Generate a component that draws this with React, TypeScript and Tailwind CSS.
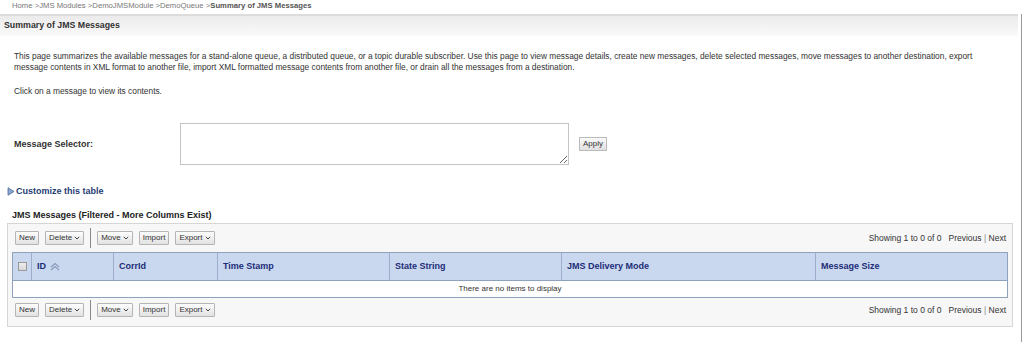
import React from "react";

const Chevron = () => (
  <svg width="6" height="4" viewBox="0 0 6 4" className="ml-[2px]">
    <path d="M0.8 0.8 L3 3 L5.2 0.8" fill="none" stroke="#444" strokeWidth="1" />
  </svg>
);

const Btn = ({ label, menu }: { label: string; menu?: boolean }) => (
  <button className="flex h-[14px] items-center rounded-[1px] border border-[#b5b5b5] bg-gradient-to-b from-[#fdfdfd] to-[#e2e2e2] px-[3px] text-[8px] leading-none text-[#333]">
    {label}
    {menu && <Chevron />}
  </button>
);

const Toolbar = () => (
  <div className="flex h-[14px] items-center justify-between pl-[7px] pr-[6px]">
    <div className="flex items-center gap-[6px]">
      <Btn label="New" />
      <Btn label="Delete" menu />
      <div className="-my-[3px] h-[20px] w-px bg-[#8a8a8a]" />
      <Btn label="Move" menu />
      <Btn label="Import" />
      <Btn label="Export" menu />
    </div>
    <div className="text-[8.5px] text-[#333]">
      Showing 1 to 0 of 0&nbsp;&nbsp; Previous <span className="text-[#888]">|</span> Next
    </div>
  </div>
);

const SortIcon = () => (
  <svg width="12" height="9" viewBox="0 0 12 9" className="ml-[3px]">
    <path d="M2 5 L6 1.5 L10 5" fill="none" stroke="#8a9cbc" strokeWidth="1.2" />
    <path d="M2 8 L6 4.5 L10 8" fill="none" stroke="#8a9cbc" strokeWidth="1.2" />
  </svg>
);

const columns = [
  { name: "CorrId", w: "w-[104px]" },
  { name: "Time Stamp", w: "w-[172px]" },
  { name: "State String", w: "w-[172px]" },
  { name: "JMS Delivery Mode", w: "w-[254px]" },
  { name: "Message Size", w: "flex-1" },
];

export default function App() {
  return (
    <div className="flex h-[342px] w-[1024px] overflow-hidden bg-white font-['Liberation_Sans',Arial,sans-serif] text-[#222]">
      <div className="w-[1018px]">
        {/* breadcrumb */}
        <div className="h-[14px] pl-[12px] pt-[1px] text-[7.7px] leading-[10px] text-[#777]">
          Home &gt;JMS Modules &gt;DemoJMSModule &gt;DemoQueue &gt;
          <span className="font-bold text-[#555]">Summary of JMS Messages</span>
        </div>

        {/* page header */}
        <div className="flex h-[22px] items-center border-t-2 border-[#dcdcdc] bg-gradient-to-b from-[#ebebeb] to-[#fafafa] pl-[4px] text-[8.8px] font-bold text-[#333]">
          Summary of JMS Messages
        </div>

        <div className="pl-[14px] pt-[15px] text-[8.35px] leading-[11px] text-[#333]">
          <p className="whitespace-nowrap">
            This page summarizes the available messages for a stand-alone queue, a distributed queue, or a topic durable subscriber. Use this page to view message details, create new messages, delete selected messages, move messages to another destination, export
            <br />
            message contents in XML format to another file, import XML formatted message contents from another file, or drain all the messages from a destination.
          </p>
          <p className="mt-[13px]">Click on a message to view its contents.</p>
        </div>

        {/* selector */}
        <div className="mt-[26px] flex items-center">
          <div className="w-[180px] pl-[14px] pt-[2px] text-[9px] font-bold text-[#333]">Message Selector:</div>
          <textarea className="h-[42px] w-[389px] resize-y border border-[#c4c4c4] bg-white" />
          <div className="ml-[10px] flex h-[14px] items-center border border-[#bbb] bg-gradient-to-b from-[#fafafa] to-[#e0e0e0] px-[3px] text-[8px] text-[#333]">
            Apply
          </div>
        </div>

        {/* customize */}
        <div className="mt-[20px] flex items-center pl-[7px] text-[9px] font-bold text-[#1f3d74]">
          <svg width="8" height="9" viewBox="0 0 8 9" className="mr-[1px]">
            <path d="M1 0.8 L7 4.5 L1 8.2 Z" fill="#8aa7cf" stroke="#4a6a99" strokeWidth="0.8" />
          </svg>
          Customize this table
        </div>

        <div className="mt-[10px] pl-[12px] text-[9px] font-bold text-[#222]">JMS Messages (Filtered - More Columns Exist)</div>

        {/* table panel */}
        <div className="ml-[7px] mt-[1px] h-[104px] w-[1006px] border border-[#d6d6d6] bg-[#f7f7f7] pt-[7px]">
          <Toolbar />
          <div className="ml-[4px] mt-[7px] w-[996px] border border-[#8ea1bd] bg-white">
            <div className="flex h-[27px] bg-[#c9d8ee] text-[9px] font-bold text-[#1d2c78]">
              <div className="flex w-[19px] items-center justify-center border-r border-[#9caecb]">
                <div className="h-[9px] w-[9px] border border-[#999] bg-gradient-to-b from-[#eee] to-[#d8d8d8]" />
              </div>
              <div className="flex w-[82px] items-center border-r border-[#9caecb] pl-[5px]">
                ID
                <SortIcon />
              </div>
              {columns.map((c, i) => (
                <div
                  key={c.name}
                  className={`flex items-center pl-[5px] ${c.w} ${i < columns.length - 1 ? "border-r border-[#9caecb]" : ""}`}
                >
                  {c.name}
                </div>
              ))}
            </div>
            <div className="flex h-[17px] items-center justify-center border-t border-[#8ea1bd] text-[8px] text-[#333]">
              There are no items to display
            </div>
          </div>
          <div className="mt-[5px]">
            <Toolbar />
          </div>
        </div>
      </div>
      <div className="ml-[3px] mt-[14px] h-full w-px bg-[#999]" />
    </div>
  );
}
